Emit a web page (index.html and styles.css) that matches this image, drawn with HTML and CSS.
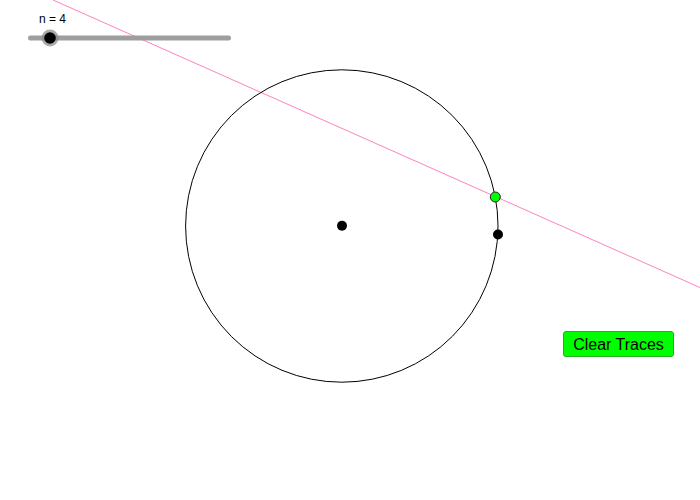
FILE: index.html
```html
<!DOCTYPE html>
<html>
<head>
<meta charset="utf-8">
<link rel="stylesheet" href="styles.css">
</head>
<body>
<div class="applet">
  <svg class="canvas" width="700" height="500" viewBox="0 0 700 500">
    <line x1="53" y1="0" x2="700" y2="287.5" stroke="#ff80c0" stroke-width="1"/>
    <circle cx="341.8" cy="226" r="156.2" fill="none" stroke="#000" stroke-width="1"/>
    <line x1="30.5" y1="38" x2="228.5" y2="38" stroke="#999" stroke-width="5" stroke-linecap="round" opacity="0.95"/>
    <circle cx="50" cy="38" r="8.5" fill="#888" opacity="0.7"/>
    <circle cx="50" cy="38" r="5.8" fill="#000"/>
    <text x="39" y="23" class="label">n = 4</text>
    <circle cx="342" cy="225.8" r="5" fill="#000"/>
    <circle cx="498" cy="234.5" r="5" fill="#000"/>
    <circle cx="495.3" cy="197" r="5" fill="#00ff00" stroke="#222" stroke-width="1"/>
  </svg>
  <button class="clear-btn">Clear Traces</button>
</div>
</body>
</html>
```

FILE: styles.css
```css
html, body {
  margin: 0;
  padding: 0;
  background: #fff;
}
.applet {
  position: relative;
  width: 700px;
  height: 500px;
  overflow: hidden;
}
.canvas {
  display: block;
}
.label {
  font-family: "Liberation Sans", Arial, sans-serif;
  font-size: 12px;
  fill: #000;
}
.clear-btn {
  position: absolute;
  left: 563px;
  top: 331px;
  width: 111px;
  height: 26px;
  margin: 0;
  padding: 1px 0 0 0;
  background: #00ff00;
  border: 1px solid #22b022;
  border-radius: 3px;
  font-family: "Liberation Sans", Arial, sans-serif;
  font-size: 16px;
  color: #000;
  line-height: 24px;
  text-align: center;
}
```
